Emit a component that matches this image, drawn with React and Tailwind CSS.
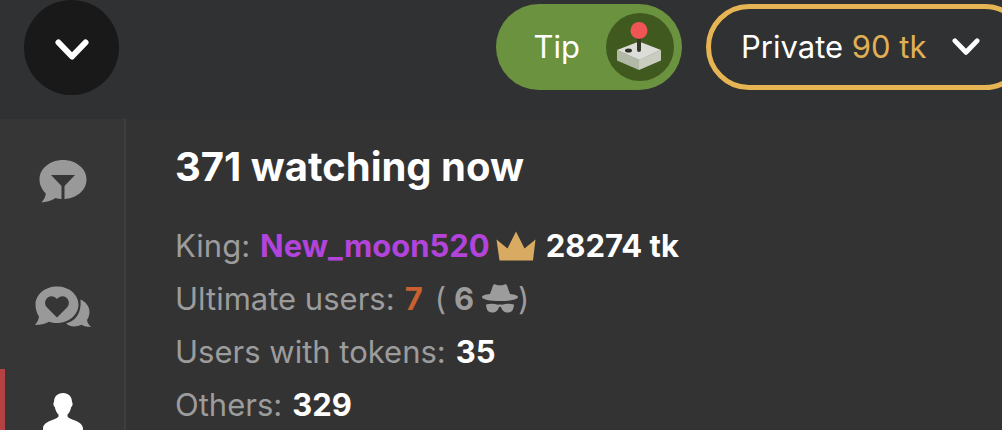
const ChevronDown = ({ className }) => (
  <svg viewBox="0 0 34 22" className={className} fill="none" aria-hidden="true">
    <path
      d="M3.5 3.5 17 17.5 30.5 3.5"
      stroke="currentColor"
      strokeWidth="6"
      strokeLinecap="round"
      strokeLinejoin="round"
    />
  </svg>
);

const JoystickIcon = () => (
  <svg viewBox="0 0 68 68" className="size-[68px]" aria-hidden="true">
    <circle cx="34" cy="34" r="34" fill="#40591f" />
    <path d="M11 37 33 28.5 55 37 33 47Z" fill="#dcddd8" />
    <path d="M11 37 33 46.5V57L11 47.5Z" fill="#b2baa7" />
    <path d="M55 37 33 46.5V57L55 47.5Z" fill="#c9cdc0" />
    <ellipse cx="22.5" cy="37.5" rx="3.5" ry="2" fill="#2e3226" />
    <path d="M33 24v13" stroke="#33382b" strokeWidth="4" strokeLinecap="round" />
    <circle cx="33" cy="17.5" r="8.5" fill="#ef5555" />
  </svg>
);

const FilterChatIcon = () => (
  <svg viewBox="0 0 48 44" className="h-11 w-12" aria-hidden="true">
    <path
      d="M24 0C37 0 47.5 8.5 47.5 19.5S37 39 24 39c-3 0-5-.3-7.5-1C12 41 6.5 42 2.5 42.5c2.5-3 4-5.5 4.3-9C3 29.5.5 25 .5 19.5.5 8.5 11 0 24 0Z"
      fill="currentColor"
    />
    <path d="M12 15h24L25.5 26V40h-3V26Z" fill="#363636" />
  </svg>
);

const HeartChatIcon = () => (
  <svg viewBox="0 0 56 42" className="h-[42px] w-14" aria-hidden="true">
    <path
      d="M45.5 13.5C51 16 54.5 20.5 54.5 26c0 3.2-1 5.8-2.5 8 .4 2.8 1.8 4.7 4 7-4 0-7-.7-9.5-2.2-6 2.5-11.5 2-15.5-1.3C40 35 46.8 28 45.5 13.5Z"
      fill="currentColor"
    />
    <path
      d="M22 .5c12 0 21.5 8 21.5 18S34 37 22 37c-3 0-5.5-.4-8-1.2C10 38 5 39 0 39c2-2.5 3.5-5 4-8.5C1.8 27.5.5 23 .5 18.5.5 8.5 10 .5 22 .5Z"
      fill="currentColor"
    />
    <path
      d="M22 31.5 12 21.5c-6-6.5 3.5-16 10-8.5 6.5-7.5 16 2 10 8.5Z"
      fill="#363636"
    />
  </svg>
);

const PersonIcon = () => (
  <svg viewBox="0 0 42 78" className="h-[78px] w-[42px]" aria-hidden="true">
    <path
      d="M21 0c5.5 0 9 3.5 9 9 1 .5.7 4-.8 5-.7 3.5-2 6-3.7 7.5v2c2 3.500 14.500 4 15.500 11.500V50H1V35C2 27.500 14.500 27 16.500 23.500v-2C14.800 20 13.500 17.500 12.800 14c-1.500-1-1.800-4.500-.8-5C12 3.500 15.500 0 21 0Z"
      fill="currentColor"
    />
  </svg>
);

const CrownIcon = () => (
  <svg viewBox="0 0 40 30" className="h-[30px] w-10" aria-hidden="true">
    <path d="M.5 8.5 11.5 17.5 20 .5l8.5 17L39.5 8.5 37 29.5H3.5Z" fill="#d9ab62" />
  </svg>
);

const IncognitoIcon = () => (
  <svg viewBox="0 0 36 29" className="h-[29px] w-9" fill="currentColor" aria-hidden="true">
    <path d="M8 10 11 1.5C11.5.5 12.5 0 13.5.4c3 1.2 6 1.2 9 0 1-.4 2 .1 2.5 1.1L28 10c5 .6 8 1.5 8 3 0 2.5-8 4-18 4S0 15.5 0 13c0-1.5 3-2.4 8-3Z" />
    <path d="M4 20.5c4-1 8-1 12 .3 1.3-.4 2.7-.4 4 0 4-1.3 8-1.3 12-.3-.3 5-2 8-6 8s-6-2-7-5.500c-.6-.4-1.400-.4-2 0-1 3.500-3 5.500-7 5.500s-5.700-3-6-8Z" />
  </svg>
);

const tabs = [
  { label: "Public chat", Icon: FilterChatIcon },
  { label: "Private chats", Icon: HeartChatIcon },
  { label: "Users", Icon: PersonIcon, active: true },
];

function TopBar() {
  return (
    <header className="flex h-[119px] shrink-0 items-start bg-[#303132] pl-6">
      <button
        aria-label="Collapse"
        className="flex size-[95px] shrink-0 items-center justify-center rounded-full bg-[#19191a] pt-1"
      >
        <ChevronDown className="h-[22px] w-[34px]" />
      </button>
      <div className="-mr-[26px] ml-auto flex shrink-0 gap-6 pt-1">
        <button className="flex h-[86px] items-center gap-[26px] rounded-full bg-[#6b923f] pr-2 pl-[38px] text-[31px]">
          Tip
          <JoystickIcon />
        </button>
        <button className="flex h-[86px] w-[322px] items-center gap-[26px] rounded-full border-5 border-[#e6b453] pl-[30px] text-[31px]">
          <span>
            Private <span className="text-[#e0b055]">90 tk</span>
          </span>
          <ChevronDown className="h-[18px] w-7" />
        </button>
      </div>
    </header>
  );
}

function Sidebar() {
  return (
    <nav className="w-[126px] shrink-0 border-r-2 border-[#3f3f3f] bg-[#363636]">
      {tabs.map(({ label, Icon, active }) => (
        <button
          key={label}
          aria-label={label}
          className={`flex h-[125px] w-full items-center justify-center border-l-5 pr-1 ${
            active ? "border-[#b44144] text-white" : "border-transparent text-[#999999]"
          }`}
        >
          <Icon />
        </button>
      ))}
    </nav>
  );
}

function StatRow({ label, children }) {
  return (
    <div className="flex items-center gap-[10px]">
      <dt>{label}:</dt>
      <dd className="flex items-center font-bold text-white">{children}</dd>
    </div>
  );
}

export default function App() {
  return (
    <div className="flex h-screen flex-col overflow-hidden bg-[#333333] font-['Inter',sans-serif] text-white">
      <TopBar />
      <div className="flex min-h-0 flex-1">
        <Sidebar />
        <main className="flex-1 pt-6 pl-[49px] whitespace-nowrap">
          <h1 className="text-[40px] leading-12 font-bold">371 watching now</h1>
          <dl className="mt-7 text-[31px] leading-[53px] text-[#9c9c9c]">
            <StatRow label="King">
              <span className="text-[#b244dc]">New_moon520</span>
              <span className="mr-2.5 ml-1.5">
                <CrownIcon />
              </span>
              28274 tk
            </StatRow>
            <StatRow label="Ultimate users">
              <span className="text-[#c8602f]">7</span>
              <span className="ml-3 flex items-center font-normal text-[#9c9c9c]">
                (<b className="mx-2 font-bold">6</b>
                <IncognitoIcon />)
              </span>
            </StatRow>
            <StatRow label="Users with tokens">35</StatRow>
            <StatRow label="Others">329</StatRow>
          </dl>
        </main>
      </div>
    </div>
  );
}
